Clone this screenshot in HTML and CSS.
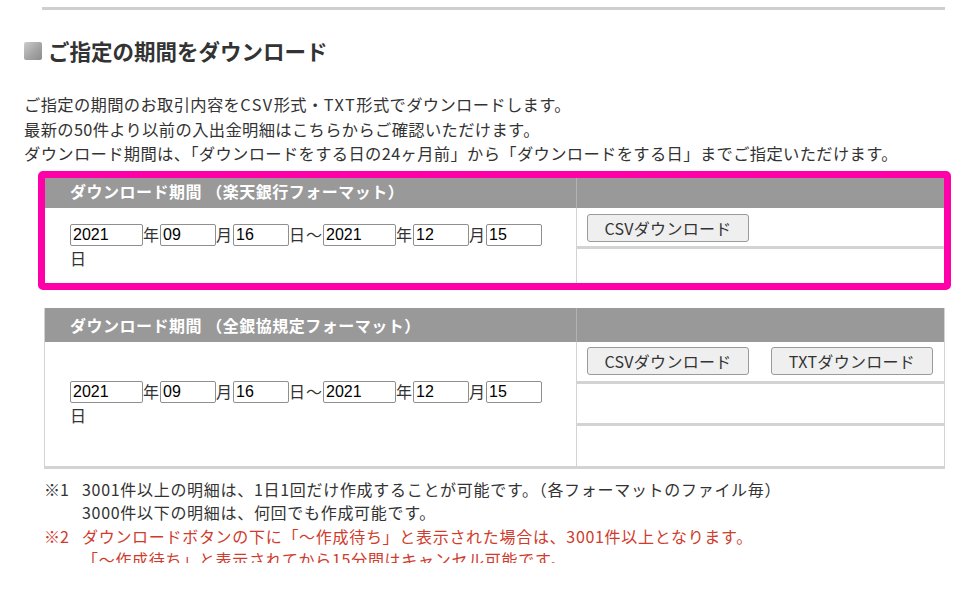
FILE: index.html
```html
<!DOCTYPE html>
<html lang="ja">
<head>
<meta charset="utf-8">
<title>ご指定の期間をダウンロード</title>
<link rel="stylesheet" href="styles.css">
</head>
<body>
<div class="page">
  <div class="topline"></div>
  <h2 class="heading"><span class="sq"></span>ご指定の期間をダウンロード</h2>
  <p class="intro">ご指定の期間のお取引内容を<span class="lat">CSV</span>形式・<span class="lat">TXT</span>形式でダウンロードします。<br>最新の50件より以前の入出金明細はこちらからご確認いただけます。<br>ダウンロード期間は、「ダウンロードをする日の24ヶ月前」から「ダウンロードをする日」までご指定いただけます。</p>

  <div class="dl dl-first">
    <div class="hd hd-left">ダウンロード期間 （楽天銀行フォーマット）</div>
    <div class="hd hd-right"></div>
    <div class="dates"><div class="dates-in"><input class="in-y" value="2021">年<input class="in-md" value="09">月<input class="in-md" value="16">日～<input class="in-y" value="2021">年<input class="in-md" value="12">月<input class="in-md" value="15">日</div></div>
    <div class="actions">
      <div class="act act-a"><button class="btn">CSVダウンロード</button></div>
      <div class="act act-b"></div>
    </div>
  </div>

  <div class="dl dl-second">
    <div class="hd hd-left">ダウンロード期間 （全銀協規定フォーマット）</div>
    <div class="hd hd-right"></div>
    <div class="dates"><div class="dates-in"><input class="in-y" value="2021">年<input class="in-md" value="09">月<input class="in-md" value="16">日～<input class="in-y" value="2021">年<input class="in-md" value="12">月<input class="in-md" value="15">日</div></div>
    <div class="actions">
      <div class="act act-c"><button class="btn">CSVダウンロード</button><button class="btn">TXTダウンロード</button></div>
      <div class="act act-e"></div>
      <div class="act act-f"></div>
    </div>
  </div>

  <div class="notes">
    <div class="note"><span class="mark">※1</span><span class="txt">3001件以上の明細は、1日1回だけ作成することが可能です。（各フォーマットのファイル毎）<br>3000件以下の明細は、何回でも作成可能です。</span></div>
    <div class="note red"><span class="mark">※2</span><span class="txt">ダウンロードボタンの下に「～作成待ち」と表示された場合は、3001件以上となります。<br>「～作成待ち」と表示されてから15分間はキャンセル可能です。</span></div>
  </div>
</div>
</body>
</html>
```

FILE: styles.css
```css
html, body {
  margin: 0;
  padding: 0;
  background: #fff;
}
body {
  font-family: "Noto Sans CJK JP", "Noto Sans", sans-serif;
  color: #333;
}
.page {
  width: 970px;
  height: 594px;
  overflow: hidden;
}
.topline {
  margin: 7px 0 0 42px;
  width: 903px;
  height: 3px;
  background: #cfcfcf;
}
.heading {
  margin: 26px 0 0 24px;
  font-size: 21.5px;
  line-height: 30px;
  font-weight: bold;
  color: #333;
  display: flex;
  align-items: center;
}
.sq {
  display: inline-block;
  width: 18px;
  height: 18px;
  margin-right: 6px;
  border-radius: 2px;
  background: linear-gradient(135deg, #cdcdcd 0%, #a4a4a4 55%, #8c8c8c 100%);
}
.intro {
  margin: 26px 0 0 24px;
  font-size: 16.3px;
  line-height: 24.5px;
  letter-spacing: 0.35px;
  color: #333;
}
.lat {
  letter-spacing: 1.5px;
}
.dl {
  position: relative;
  margin-left: 44px;
  width: 901px;
  box-sizing: border-box;
  display: grid;
  grid-template-columns: 532px 1fr;
  grid-template-rows: 34px auto;
  border-left: 1px solid #d3d3d3;
  border-right: 1px solid #d3d3d3;
  border-bottom: 3px solid #d3d3d3;
}
.dl-first {
  margin-top: 8px;
}
.dl-first::after {
  content: "";
  position: absolute;
  top: -3px;
  left: -7px;
  right: -7px;
  bottom: -4px;
  border: 7px solid #ff00a8;
  border-radius: 5px;
  pointer-events: none;
}
.dl-second {
  margin-top: 19px;
}
.hd {
  background: #999;
  color: #fff;
  font-weight: bold;
  font-size: 16px;
  line-height: 34px;
  letter-spacing: 0.5px;
}
.hd-left {
  padding-left: 25px;
  border-right: 1px solid #b2b2b2;
}
.dates {
  border-right: 1px solid #d3d3d3;
  padding: 0 20px 0 25px;
  display: flex;
  align-items: center;
  font-size: 16px;
  line-height: 23px;
  letter-spacing: 1px;
  color: #333;
}
.dates input {
  box-sizing: border-box;
  height: 22px;
  margin: 0;
  padding: 0 2px;
  border: 1px solid #8f8f8f;
  border-radius: 2px;
  font-family: "Liberation Sans", Arial, sans-serif;
  font-size: 16px;
  letter-spacing: 0;
  color: #000;
  background: #fff;
  vertical-align: middle;
  position: relative;
  top: -1px;
}
.in-y {
  width: 73px;
}
.in-md {
  width: 56px;
}
.actions {
  display: flex;
  flex-direction: column;
}
.act + .act {
  border-top: 3px solid #d3d3d3;
}
.act {
  box-sizing: border-box;
  padding: 6px 0 0 10px;
  display: flex;
  gap: 22px;
}
.act-a { height: 38px; }
.act-b { height: 40px; }
.act-c { height: 39px; padding-top: 5px; }
.act-e { height: 42px; }
.act-f { height: 43px; }
.btn {
  box-sizing: border-box;
  width: 162px;
  height: 28px;
  margin: 0;
  padding: 0;
  background: #efefef;
  border: 1px solid #9a9a9a;
  border-radius: 3px;
  font-family: "Noto Sans CJK JP", "Noto Sans", sans-serif;
  font-size: 16px;
  line-height: 26px;
  letter-spacing: 0.3px;
  color: #333;
}
.notes {
  margin: 9px 0 0 44px;
  height: 85px;
  overflow: hidden;
  font-size: 16px;
  line-height: 23.5px;
  letter-spacing: 0.7px;
  color: #333;
}
.note {
  display: flex;
}
.mark {
  width: 38px;
  flex: none;
  letter-spacing: 0;
}
.red {
  color: #cf3b2c;
}
```
